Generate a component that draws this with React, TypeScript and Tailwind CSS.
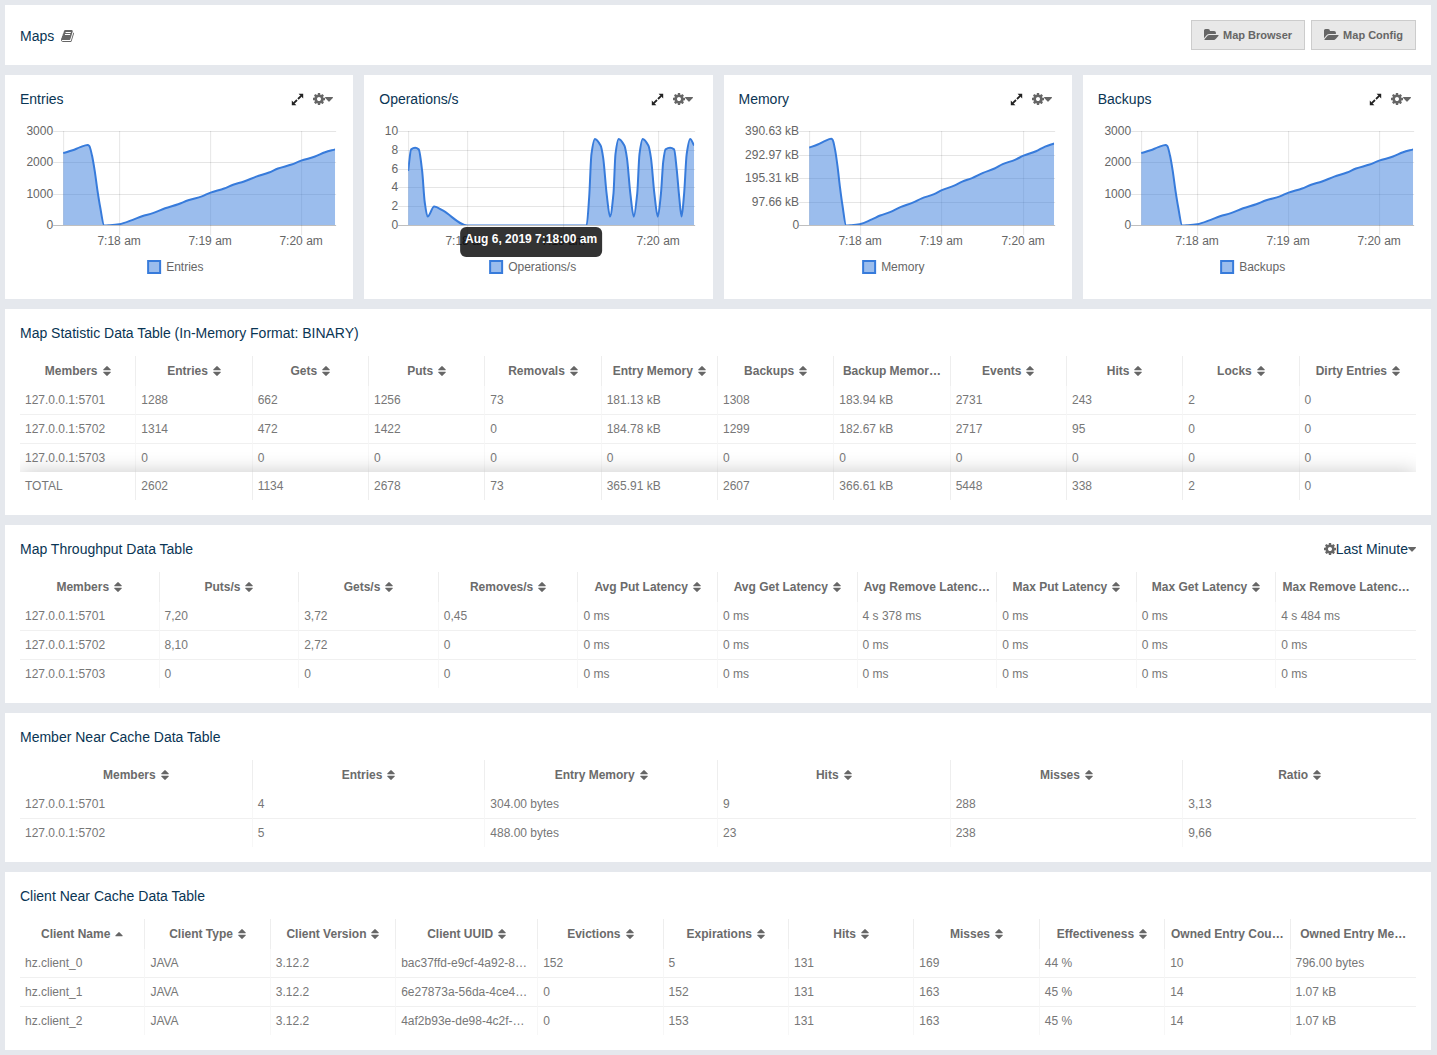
import React, { useId } from "react";

type Point = [number, number];

type ChartProps = {
  title: string;
  points: Point[];
  max: number;
  left: number;
  ticks: string[];
  times: number[];
  legendX: number;
  tooltip?: string;
};

type Column = { label: string; sort?: "both" | "asc"; width?: string };

type DataTableProps = {
  title: string;
  columns: Column[];
  rows: string[][];
  total?: string[];
  action?: React.ReactNode;
};

const COG_PATH =
  "M1152 896q0-106-75-181t-181-75-181 75-75 181 75 181 181 75 181-75 75-181zm512-109v222q0 12-8 23t-20 13l-185 28q-19 54-39 91 35 50 107 138 10 12 10 25t-9 23q-27 37-99 108t-94 71q-12 0-26-9l-138-108q-44 23-91 38-16 136-29 186-7 28-36 28h-222q-14 0-24.5-8.5t-11.5-21.5l-28-184q-49-16-90-37l-141 107q-10 9-25 9-14 0-25-11-126-114-165-168-7-10-7-23 0-12 8-23 15-21 51-66.5t54-70.5q-27-50-41-99l-183-27q-13-2-21-12.5t-8-23.5v-222q0-12 8-23t19-13l186-28q14-46 39-92-40-57-107-138-10-12-10-24 0-10 9-23 26-36 98.5-107.5t94.5-71.5q13 0 26 10l138 107q44-23 91-38 16-136 29-186 7-28 36-28h222q14 0 24.5 8.5t11.5 21.5l28 184q49 16 90 37l142-107q9-9 24-9 13 0 25 10 129 119 165 170 7 8 7 22 0 12-8 23-15 21-51 66.5t-54 70.5q26 50 41 98l183 28q13 2 21 12.5t8 23.5z";

const BOOK_PATH =
  "M1639 478q40 57 18 129l-275 906q-19 64-76.5 107.5t-122.5 43.5h-923q-77 0-148.5-53.5t-99.5-131.5q-24-67-2-127 0-4 3-27t4-37q1-8-3-21.5t-3-19.5q2-11 8-21t16.5-23.5 16.5-23.5q23-38 45-91.5t30-91.5q3-10 .5-30t-.5-28q3-11 17-28t17-23q21-36 42-92t25-90q1-9-2.5-32t.5-28q4-13 22-30.5t22-22.5q19-26 42.5-84.5t27.5-96.5q1-8-3-25.5t-2-26.5q2-8 9-18t18-23 17-21q8-12 16.5-30.5t15-35 16-36 19.5-32 26.5-23.5 36-11.5 47.5 5.5l-1 3q38-9 51-9h761q74 0 114 56t18 130l-274 906q-36 119-71.5 153.5t-128.5 34.5h-869q-27 0-38 15-11 16-1 43 24 70 144 70h923q29 0 56-15.5t35-41.5l300-987q7-22 5-57 38 15 59 43zm-1064 2q-4 13 2 22.5t20 9.5h608q13 0 25.5-9.5t16.5-22.5l21-64q4-13-2-22.5t-20-9.5h-608q-13 0-25.5 9.5t-16.5 22.5zm-83 256q-4 13 2 22.5t20 9.5h608q13 0 25.5-9.5t16.5-22.5l21-64q4-13-2-22.5t-20-9.5h-608q-13 0-25.5 9.5t-16.5 22.5z";

const FOLDER_PATH =
  "M1815 952q0 31-31 66l-336 396q-43 51-120.5 86.5t-143.5 35.5h-1088q-34 0-60.5-13t-26.5-43q0-31 31-66l336-396q43-51 120.5-86.5t143.5-35.5h1088q34 0 60.5 13t26.5 43zm-343-344v160h-832q-94 0-197 47.5t-164 119.5l-337 396-5 6q0-4-.5-12.5t-.5-12.5v-960q0-92 66-158t158-66h320q92 0 158 66t66 158v32h544q92 0 158 66t66 158z";

const BookIcon = () => (
  <svg viewBox="0 0 1792 1792" className="h-3.5 w-3.5 fill-[#666]">
    <path d={BOOK_PATH} />
  </svg>
);

const CogIcon = () => (
  <svg viewBox="128 0 1536 1792" className="h-3.5 w-3 fill-[#666]">
    <path d={COG_PATH} />
  </svg>
);

const FolderIcon = () => (
  <svg viewBox="0 0 1820 1792" className="h-3.5 w-[15px] fill-[#666]">
    <path d={FOLDER_PATH} />
  </svg>
);

const CaretIcon = () => (
  <svg viewBox="0 0 8 5" className="h-[5px] w-2 fill-[#666]">
    <path d="M.5 0h7q.8.2.3.9L4.4 4.5q-.4.4-.8 0L.2.9Q-.3.2.5 0z" />
  </svg>
);

const ExpandIcon = () => (
  <svg viewBox="0 0 13 13" className="h-[13px] w-[13px]">
    <path d="M7.6.8h4.6v4.6zM.8 7.6v4.6h4.6z" fill="#222" />
    <path d="M10.2 2.8L7 6M6 7l-3.2 3.2" stroke="#222" strokeWidth="1.8" />
  </svg>
);

const SortIcon = ({ sort }: { sort: "both" | "asc" }) =>
  sort === "asc" ? (
    <svg viewBox="0 0 8 10" className="h-2.5 w-2 shrink-0 fill-[#666]">
      <path d="M.7 7.3h6.6q.7-.2.3-.8L4.4 3.3q-.4-.4-.8 0L.4 6.5q-.4.6.3.8z" />
    </svg>
  ) : (
    <svg viewBox="0 0 8 10" className="h-2.5 w-2 shrink-0 fill-[#666]">
      <path d="M.6 4.3h6.8q.7-.2.3-.9L4.4.2q-.4-.4-.8 0L.3 3.4q-.4.7.3.9zM.6 5.7h6.8q.7.2.3.9L4.4 9.8q-.4.4-.8 0L.3 6.6q-.4-.7.3-.9z" />
    </svg>
  );

// x runs from 0 to 100 over the plotted time window
const growth: Point[] = [
  [0, 2310], [3.5, 2400], [6.3, 2500], [9, 2570], [9.6, 2540], [10.6, 2240], [11.6, 1750],
  [12.6, 1130], [13.6, 600], [15.1, 0], [17.2, 10], [20.6, 40], [25.6, 180], [29, 295],
  [33, 395], [37.5, 550], [42.3, 680], [46, 805], [51, 930], [54.2, 1050], [59.2, 1180],
  [62.5, 1300], [66.5, 1405], [71, 1560], [75.7, 1690], [79, 1820], [84, 1945], [87.5, 2070],
  [92.6, 2200], [96.3, 2340], [100, 2430],
];

const memory = growth.map(([x, y]): Point => [x, y * 0.1402]);

const operations: Point[] = [
  [0, 5.8], [1.05, 8.1], [2.45, 8.27], [3.7, 8.1], [4.9, 5.8], [5.8, 2.5], [6.8, 0.95],
  [9.1, 2.02], [12.1, 1.6], [20.7, 0], [60.6, 0], [62.4, 0], [63.3, 3], [64.1, 7.6],
  [65.3, 9.2], [67.3, 8.5], [68.2, 7.2], [69.4, 3.4], [70.6, 0.95], [71.8, 3.4], [72.5, 7.6],
  [73.6, 9.2], [75.6, 8.5], [76.5, 7.2], [77.7, 3.4], [78.9, 0.95], [80.1, 3.4], [80.9, 7.6],
  [82, 9.2], [84, 8.5], [84.9, 7.2], [86.1, 3.4], [87.3, 0.95], [88.4, 3.4], [89.2, 6.8],
  [90, 8.1], [91.6, 8.27], [93, 8.1], [93.9, 6], [94.8, 3], [95.6, 0.95], [96.5, 3.4],
  [97.4, 7.6], [98.6, 9.2], [100, 8.5],
];

const charts: ChartProps[] = [
  { title: "Entries", points: growth, max: 3000, left: 43, ticks: ["3000", "2000", "1000", "0"], times: [99, 190, 281], legendX: 128 },
  { title: "Operations/s", points: operations, max: 10, left: 29, ticks: ["10", "8", "6", "4", "2", "0"], times: [88, 184, 279], legendX: 111, tooltip: "Aug 6, 2019 7:18:00 am" },
  { title: "Memory", points: memory, max: 390.63, left: 70, ticks: ["390.63 kB", "292.97 kB", "195.31 kB", "97.66 kB", "0"], times: [121, 202, 284], legendX: 124 },
  { title: "Backups", points: growth, max: 3000, left: 43, ticks: ["3000", "2000", "1000", "0"], times: [99, 190, 281], legendX: 123 },
];

const timeLabels = ["7:18 am", "7:19 am", "7:20 am"];

const TOP = 23;
const BOTTOM = 117;
const RIGHT = 315;

// Monotone cubic curve through the points, so that peaks never overshoot
const curve = (pts: Point[]) => {
  const slopes = pts.slice(1).map(([x, y], i) => (y - pts[i][1]) / (x - pts[i][0]));
  const tangents = pts.map((_, i) => {
    if (i === 0) return slopes[0];
    if (i === pts.length - 1) return slopes[i - 1];
    const a = slopes[i - 1];
    const b = slopes[i];
    return a * b <= 0 ? 0 : (2 * a * b) / (a + b);
  });
  return pts.slice(1).reduce((d, [x, y], i) => {
    const [px, py] = pts[i];
    const h = (x - px) / 3;
    return `${d}C${px + h} ${py + tangents[i] * h} ${x - h} ${y - tangents[i + 1] * h} ${x} ${y}`;
  }, `M${pts[0][0]} ${pts[0][1]}`);
};

const Chart = ({ title, points, max, left, ticks, times, legendX, tooltip }: ChartProps) => {
  const clipId = useId();
  const line = curve(
    points.map(([x, y]): Point => [
      left + (x / 100) * (RIGHT - left),
      BOTTOM + 0.5 - (y / max) * (BOTTOM - TOP),
    ])
  );

  return (
    <svg viewBox="0 0 318 176" className="h-44 w-full text-xs" role="img" aria-label={title}>
      <clipPath id={clipId}>
        <rect x={left} y={TOP - 5} width={RIGHT - left} height={BOTTOM - TOP + 5} />
      </clipPath>

      {/* Grid */}
      {ticks.map((tick, i) => {
        const y = Math.round(TOP + ((BOTTOM - TOP) * i) / (ticks.length - 1));
        return (
          <g key={tick}>
            <path
              d={`M${left - 10} ${y + 0.5}H${RIGHT + 1}`}
              stroke="#000"
              strokeOpacity={i === ticks.length - 1 ? 0.25 : 0.1}
            />
            <text x={left - 10} y={y + 4} textAnchor="end" fill="#666">
              {tick}
            </text>
          </g>
        );
      })}
      <path d={`M${left + 0.5} ${TOP}V${BOTTOM}`} stroke="#000" strokeOpacity="0.1" />
      {times.map((x, i) => (
        <g key={x}>
          <path d={`M${x + 0.5} ${TOP}V${BOTTOM + 10}`} stroke="#000" strokeOpacity="0.1" />
          <text x={x} y={137} textAnchor="middle" fill="#666">
            {timeLabels[i]}
          </text>
        </g>
      ))}

      {/* Series */}
      <g clipPath={`url(#${clipId})`}>
        <path d={`${line}V${BOTTOM + 1}H${left}Z`} fill="#377bdb" fillOpacity="0.5" />
        <path d={line} fill="none" stroke="#377bdb" strokeWidth="2" />
      </g>

      {/* Legend */}
      <rect x={legendX} y="153" width="12" height="12" fill="#9bbded" stroke="#377bdb" strokeWidth="2" />
      <text x={legendX + 18} y="163" fill="#666">
        {title}
      </text>

      {tooltip && (
        <g>
          <rect x="81" y="119" width="142" height="30" rx="6" fillOpacity="0.8" />
          <text x="152" y="135" textAnchor="middle" fill="#fff" className="font-bold">
            {tooltip}
          </text>
        </g>
      )}
    </svg>
  );
};

const ChartCard = (props: ChartProps) => (
  <section className="bg-white p-[15px]">
    <header className="flex h-[18px] items-center justify-between">
      <h2 className="text-sm leading-[18px] text-[#0a3554]">{props.title}</h2>
      <div className="flex items-center gap-[9px] pr-[5px]">
        <button type="button" aria-label={`Expand ${props.title}`}>
          <ExpandIcon />
        </button>
        <button type="button" aria-label={`${props.title} settings`} className="flex items-center">
          <CogIcon />
          <CaretIcon />
        </button>
      </div>
    </header>
    <Chart {...props} />
  </section>
);

const DataTable = ({ title, columns, rows, total, action }: DataTableProps) => (
  <section className="bg-white p-[15px]">
    <header className="mb-3.5 flex h-[18px] items-center justify-between text-sm leading-[18px] text-[#0a3554]">
      <h2>{title}</h2>
      {action}
    </header>
    <div className="overflow-hidden">
      <table className="w-full table-fixed border-separate border-spacing-0 text-xs text-[#777]">
        <colgroup>
          {columns.map((column) => (
            <col key={column.label} className={column.width} />
          ))}
        </colgroup>
        <thead>
          <tr>
            {columns.map(({ label, sort = "both" }) => (
              <th key={label} className="h-[30px] border-r border-[#eee] p-0 px-[5px] text-[#6b6b6b] last:border-r-0">
                <button type="button" className="flex w-full items-center justify-center gap-[5px] whitespace-nowrap">
                  {label}
                  {!label.endsWith("…") && <SortIcon sort={sort} />}
                </button>
              </th>
            ))}
          </tr>
        </thead>
        <tbody>
          {rows.map((row, i) => (
            <tr key={row[0]}>
              {row.map((cell, j) => (
                <td
                  key={j}
                  className={`truncate border-r border-r-[#f7f7f7] px-[5px] last:border-r-0 ${
                    i < rows.length - 1 ? "h-[29px] border-b border-b-[#f0f0f0]" : "h-7"
                  }`}
                >
                  {cell}
                </td>
              ))}
            </tr>
          ))}
        </tbody>
        {total && (
          <tfoot>
            <tr className="shadow-[0_0_20px_0_rgba(0,0,0,0.22)]">
              {total.map((cell, j) => (
                <td key={j} className="h-7 border-r border-[#eee] bg-white px-[5px] last:border-r-0">
                  {cell}
                </td>
              ))}
            </tr>
          </tfoot>
        )}
      </table>
    </div>
  </section>
);

const toColumns = (labels: string[]): Column[] => labels.map((label) => ({ label }));

const statisticColumns = toColumns([
  "Members", "Entries", "Gets", "Puts", "Removals", "Entry Memory",
  "Backups", "Backup Memor…", "Events", "Hits", "Locks", "Dirty Entries",
]);

const statisticRows = [
  ["127.0.0.1:5701", "1288", "662", "1256", "73", "181.13 kB", "1308", "183.94 kB", "2731", "243", "2", "0"],
  ["127.0.0.1:5702", "1314", "472", "1422", "0", "184.78 kB", "1299", "182.67 kB", "2717", "95", "0", "0"],
  ["127.0.0.1:5703", "0", "0", "0", "0", "0", "0", "0", "0", "0", "0", "0"],
];

const statisticTotal = ["TOTAL", "2602", "1134", "2678", "73", "365.91 kB", "2607", "366.61 kB", "5448", "338", "2", "0"];

const throughputColumns = toColumns([
  "Members", "Puts/s", "Gets/s", "Removes/s", "Avg Put Latency", "Avg Get Latency",
  "Avg Remove Latenc…", "Max Put Latency", "Max Get Latency", "Max Remove Latenc…",
]);

const throughputRows = [
  ["127.0.0.1:5701", "7,20", "3,72", "0,45", "0 ms", "0 ms", "4 s 378 ms", "0 ms", "0 ms", "4 s 484 ms"],
  ["127.0.0.1:5702", "8,10", "2,72", "0", "0 ms", "0 ms", "0 ms", "0 ms", "0 ms", "0 ms"],
  ["127.0.0.1:5703", "0", "0", "0", "0 ms", "0 ms", "0 ms", "0 ms", "0 ms", "0 ms"],
];

const memberColumns = toColumns(["Members", "Entries", "Entry Memory", "Hits", "Misses", "Ratio"]);

const memberRows = [
  ["127.0.0.1:5701", "4", "304.00 bytes", "9", "288", "3,13"],
  ["127.0.0.1:5702", "5", "488.00 bytes", "23", "238", "9,66"],
];

const clientColumns: Column[] = [
  { label: "Client Name", sort: "asc" },
  { label: "Client Type" },
  { label: "Client Version" },
  { label: "Client UUID", width: "w-[142px]" },
  { label: "Evictions" },
  { label: "Expirations" },
  { label: "Hits" },
  { label: "Misses" },
  { label: "Effectiveness" },
  { label: "Owned Entry Cou…" },
  { label: "Owned Entry Me…" },
];

const clientRows = [
  ["hz.client_0", "JAVA", "3.12.2", "bac37ffd-e9cf-4a92-8…", "152", "5", "131", "169", "44 %", "10", "796.00 bytes"],
  ["hz.client_1", "JAVA", "3.12.2", "6e27873a-56da-4ce4…", "0", "152", "131", "163", "45 %", "14", "1.07 kB"],
  ["hz.client_2", "JAVA", "3.12.2", "4af2b93e-de98-4c2f-…", "0", "153", "131", "163", "45 %", "14", "1.07 kB"],
];

const App = () => {
  return (
    <main className="flex flex-col gap-2.5 bg-[#e5e8ed] py-[5px] pr-1.5 pl-[5px] font-['Liberation_Sans',Arial,sans-serif]">
      <header className="flex items-center justify-between bg-white p-[15px]">
        <div className="flex items-center gap-[7px] pt-0.5">
          <h1 className="text-sm leading-[18px] text-[#0a3554]">Maps</h1>
          <BookIcon />
        </div>
        <div className="flex gap-1.5">
          {["Map Browser", "Map Config"].map((label) => (
            <button
              key={label}
              type="button"
              className="flex h-[30px] items-center gap-1 border border-[#ccc] bg-[#e8e8e8] px-3 text-[11px] font-bold text-[#666]"
            >
              <FolderIcon />
              {label}
            </button>
          ))}
        </div>
      </header>

      <div className="grid grid-cols-4 gap-[11px]">
        {charts.map((chart) => (
          <ChartCard key={chart.title} {...chart} />
        ))}
      </div>

      <DataTable
        title="Map Statistic Data Table (In-Memory Format: BINARY)"
        columns={statisticColumns}
        rows={statisticRows}
        total={statisticTotal}
      />
      <DataTable
        title="Map Throughput Data Table"
        columns={throughputColumns}
        rows={throughputRows}
        action={
          <button type="button" className="flex items-center">
            <CogIcon />
            Last Minute
            <CaretIcon />
          </button>
        }
      />
      <DataTable title="Member Near Cache Data Table" columns={memberColumns} rows={memberRows} />
      <DataTable title="Client Near Cache Data Table" columns={clientColumns} rows={clientRows} />
    </main>
  );
};

export default App;
